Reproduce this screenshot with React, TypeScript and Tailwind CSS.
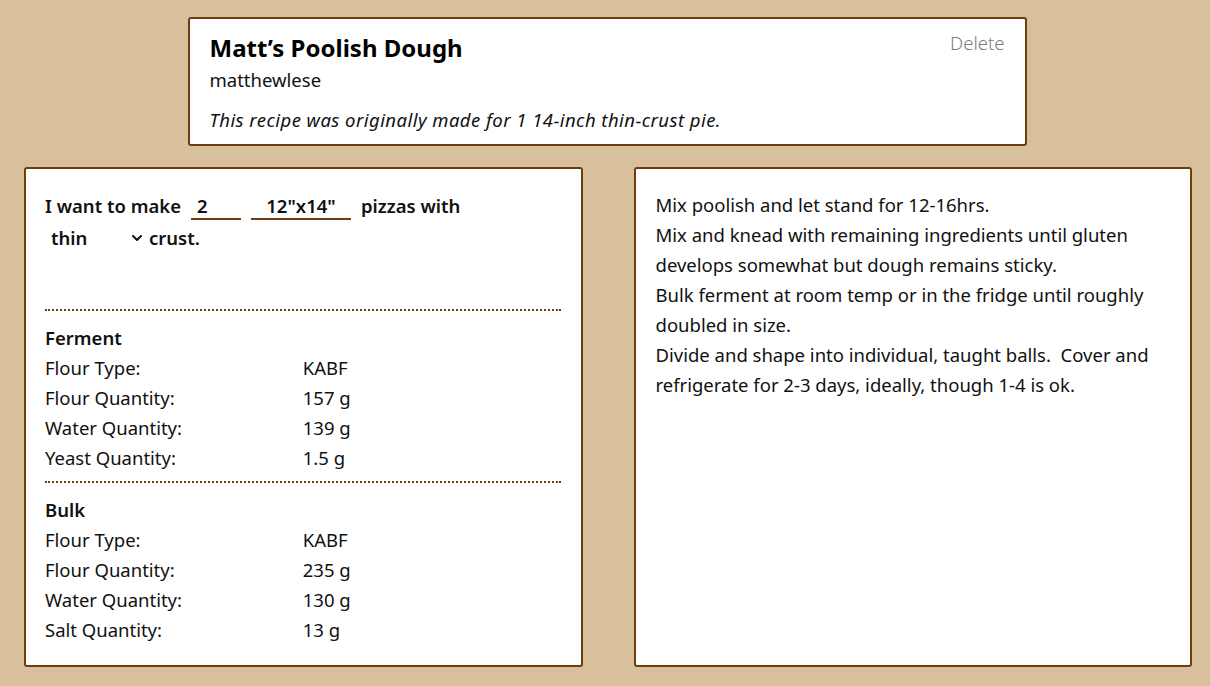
import { ChevronDown } from "lucide-react";

const ferment = [
  ["Flour Type:", "KABF"],
  ["Flour Quantity:", "157 g"],
  ["Water Quantity:", "139 g"],
  ["Yeast Quantity:", "1.5 g"],
];

const bulk = [
  ["Flour Type:", "KABF"],
  ["Flour Quantity:", "235 g"],
  ["Water Quantity:", "130 g"],
  ["Salt Quantity:", "13 g"],
];

const steps = `Mix poolish and let stand for 12-16hrs.
Mix and knead with remaining ingredients until gluten develops somewhat but dough remains sticky.
Bulk ferment at room temp or in the fridge until roughly doubled in size.
Divide and shape into individual, taught balls.  Cover and refrigerate for 2-3 days, ideally, though 1-4 is ok.`;

function Section({ title, rows }: { title: string; rows: string[][] }) {
  return (
    <section className="border-t-2 border-dotted border-[#6e3c10] pt-3">
      <h3 className="font-semibold leading-[30px]">{title}</h3>
      <dl className="grid grid-cols-2 leading-[30px]">
        {rows.map(([label, value]) => (
          <div key={label} className="contents">
            <dt>{label}</dt>
            <dd>{value}</dd>
          </div>
        ))}
      </dl>
    </section>
  );
}

export default function App() {
  return (
    <main className="min-h-screen bg-[#d9c09d] pl-6 pr-[18px] pt-[17px] pb-5 font-['Noto_Sans',sans-serif] text-[18.5px] text-[#111]">
      <header className="mx-auto w-[839px] -translate-x-px rounded-[3px] border-2 border-[#6e3c10] bg-white px-5 pt-[13px] pb-[9px]">
        <div className="flex items-start justify-between">
          <div>
            <h1 className="text-2xl font-bold leading-8 text-black">Matt’s Poolish Dough</h1>
            <p className="leading-8">matthewlese</p>
          </div>
          <button className="font-light leading-[22px] text-[#7d7d7d]">Delete</button>
        </div>
        <p className="mt-[9px] italic leading-[30px] tracking-[0.45px]">
          This recipe was originally made for 1 14-inch thin-crust pie.
        </p>
      </header>

      <div className="mt-[21px] grid grid-cols-2 gap-[51px]">
        <div className="rounded-[3px] border-2 border-[#6e3c10] bg-white pl-[19px] pr-5 pt-[21px] pb-5">
          <div className="flex flex-wrap items-center gap-x-[10px] font-semibold leading-8">
            <span>I want to make</span>
            <input
              defaultValue="2"
              className="h-[28px] w-[50px] border-b-2 border-[#6e3c10] px-[6px] pt-[2px] outline-none"
            />
            <input
              defaultValue={'12"x14"'}
              className="h-[28px] w-[100px] border-b-2 border-[#6e3c10] pt-[2px] text-center outline-none"
            />
            <span>pizzas with</span>
            <span className="inline-flex items-center">
              <select className="w-[84px] appearance-none bg-transparent pl-[6px] outline-none">
                <option>thin</option>
                <option>regular</option>
                <option>thick</option>
              </select>
              <ChevronDown size={16} strokeWidth={3} />
            </span>
            <span className="-ml-[6px]">crust.</span>
          </div>

          <div className="mt-[55px]">
            <Section title="Ferment" rows={ferment} />
          </div>
          <div className="mt-[8px]">
            <Section title="Bulk" rows={bulk} />
          </div>
        </div>

        <div className="rounded-[3px] border-2 border-[#6e3c10] bg-white px-5 pt-[21px]">
          <p className="whitespace-pre-wrap leading-[30px]">{steps}</p>
        </div>
      </div>
    </main>
  );
}
